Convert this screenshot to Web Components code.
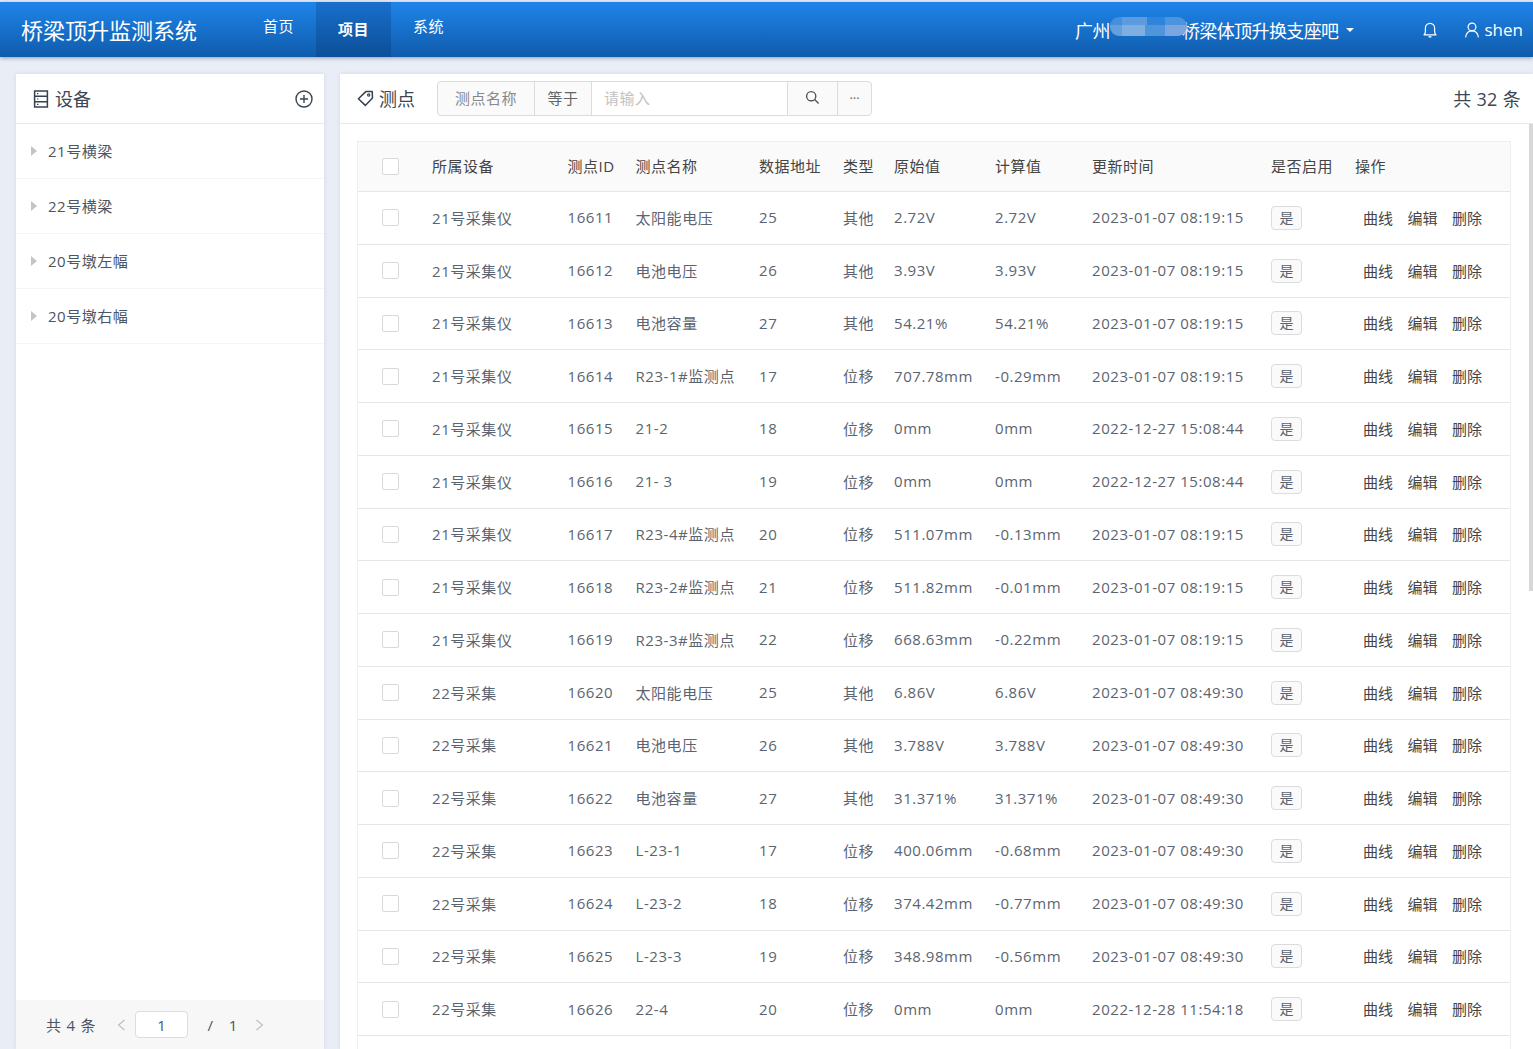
<!DOCTYPE html>
<html lang="zh">
<head>
<meta charset="utf-8">
<title>桥梁顶升监测系统</title>
<style>
html, body { margin: 0; height: 100%; overflow: hidden; }
body { background: #e9edf5; font-family: "Open Sans", "Noto Sans CJK SC", sans-serif; }
</style>
</head>
<body>
<bridge-app></bridge-app>
<script>
const icons = {
    server: `<svg width="16" height="18" viewBox="0 0 16 18" fill="none" stroke="#364152" stroke-width="1.5"><rect x="1.6" y="1" width="12.8" height="16"/><path d="M1.6 6.3h12.8M1.6 11.7h12.8"/><path d="M4 3.7h1.4M4 9h1.4M4 14.4h1.4" stroke-width="1.2"/></svg>`,
    plus: `<svg width="18" height="18" viewBox="0 0 18 18" fill="none" stroke="#3d4655" stroke-width="1.4"><circle cx="9" cy="9" r="8"/><path d="M9 5v8M5 9h8"/></svg>`,
    tag: `<svg width="17" height="17" viewBox="0 0 17 17" fill="none" stroke="#364152" stroke-width="1.5"><path d="M1.4 8.800 8.800 1.600 15.200 1.400 15.500 8 8.300 15.400Z" stroke-linejoin="round"/><circle cx="11.700" cy="5" r="1.100" stroke-width="1.200"/></svg>`,
    search: `<svg width="15" height="15" viewBox="0 0 15 15" fill="none" stroke="#555" stroke-width="1.4"><circle cx="6.2" cy="6.2" r="4.6"/><path d="m9.6 9.6 4 4"/></svg>`,
    bell: `<svg width="14" height="18" viewBox="0 0 14 18" fill="none" stroke="#fff" stroke-width="1.2"><path d="M1 13.8c1-1 1.400-2 1.400-3.400V7A4.600 4.600 0 0 1 7 2.300 4.600 4.600 0 0 1 11.600 7v3.400c0 1.400.4 2.400 1.400 3.400Z" stroke-linejoin="round"/><path d="M5.600 15.800h2.800" stroke-width="1.400"/></svg>`,
    user: `<svg width="16" height="16" viewBox="0 0 16 16" fill="none" stroke="#fff" stroke-width="1.2"><circle cx="8" cy="5" r="3.9"/><path d="M1.6 15.4c.5-4 3-6.5 6.4-6.5s5.900 2.500 6.400 6.500"/></svg>`,
    prev: `<svg width="9" height="12" viewBox="0 0 9 12" fill="none" stroke="#bdbdbd" stroke-width="1.1"><path d="M7.500 1 1.500 6l6 5"/></svg>`,
    next: `<svg width="9" height="12" viewBox="0 0 9 12" fill="none" stroke="#bdbdbd" stroke-width="1.1"><path d="m1.500 1 6 5-6 5"/></svg>`
};

class AppHeader extends HTMLElement {
    constructor() {
        super();
        this.attachShadow({mode: 'open'}).innerHTML = `
            <style>
                :host { display: flex; height: 55px; margin-top: 2px; color: #fff; flex: none; position: relative; z-index: 2;
                    background: linear-gradient(#1f84ea, #0f5cab); box-shadow: 0 1px 4px rgba(30,50,90,.45); }
                .logo { font-size: 22px; width: 263px; padding-left: 21px; box-sizing: border-box; line-height: 57px; white-space: nowrap; }
                .nav { font-size: 15px; letter-spacing: .5px; line-height: 49px; white-space: nowrap; }
                .nav.first { width: 53px; }
                .nav.on { width: 75px; text-align: center; font-weight: 700; line-height: 54px; background: rgba(0,30,80,.2); }
                .nav.last { margin-left: 22px; }
                .right { margin-left: auto; display: flex; align-items: center; font-size: 18px; }
                .project { position: relative; white-space: nowrap; letter-spacing: -.6px; margin-right: 1px; }
                .gap { display: inline-block; width: 72px; }
                .blur { position: absolute; left: 35px; top: 0; width: 77px; height: 19px; border-radius: 9px; filter: blur(.6px);
                    background:
                        linear-gradient(90deg, #4590dd 0 16%, #5b9be0 16% 48%, #2f85dc 48% 72%, #4c94de 72%) top / 100% 8px no-repeat,
                        linear-gradient(90deg, #62a0dd 0 16%, #80aee0 16% 46%, #4f95dc 46% 72%, #7aa5df 72%); }
                .caret { width: 0; height: 0; border: 4.500px solid transparent; border-top-color: #fff; border-bottom: 0; margin: 1px 0 0 6px; }
                .bell { display: flex; margin-left: 69px; }
                .user { display: flex; align-items: center; gap: 5px; margin: 0 10px 0 27px; font-size: 17px; }
            </style>
            <div class="logo">桥梁顶升监测系统</div>
            <div class="nav first">首页</div>
            <div class="nav on">项目</div>
            <div class="nav last">系统</div>
            <div class="right">
                <div class="project">广州<span class="gap"></span>桥梁体顶升换支座吧<div class="blur"></div></div>
                <div class="caret"></div>
                <div class="bell">${icons.bell}</div>
                <div class="user">${icons.user}<span>shen</span></div>
            </div>`;
    }
}
customElements.define('app-header', AppHeader);

class TreeItem extends HTMLElement {
    constructor() {
        super();
        this.attachShadow({mode: 'open'}).innerHTML = `
            <style>
                :host { display: flex; align-items: center; height: 54px; border-bottom: 1px solid #f5f5f5; padding-left: 15px; gap: 11px; font-size: 15px; letter-spacing: .5px; color: #4b5563; }
                span { padding-bottom: 2px; }
                i { width: 0; height: 0; border: 5px solid transparent; border-left: 6px solid #c4c4c4; border-right: 0; }
            </style>
            <i></i><span><slot></slot></span>`;
    }
}
customElements.define('tree-item', TreeItem);

class DevicePanel extends HTMLElement {
    constructor() {
        super();
        this.attachShadow({mode: 'open'}).innerHTML = `
            <style>
                :host { display: flex; flex-direction: column; width: 308px; background: #fff; box-shadow: 0 0 4px rgba(60,70,100,.12); }
                .head { display: flex; align-items: center; height: 49px; flex: none; border-bottom: 1px solid #e8e8e8; padding: 0 11px 0 17px; font-size: 18px; color: #3d4655; gap: 6px; }
                .head span { flex: 1; padding-bottom: 2px; }
                .head svg { display: block; }
                .list { flex: 1; }
                .foot { display: flex; align-items: center; height: 49px; flex: none; background: #f7f7f7; padding-left: 30px; font-size: 15px; letter-spacing: .8px; color: #4b5563; }
                .foot svg { display: block; flex: none; }
                .prev { margin: 0 9px 0 21px; }
                .next { margin-left: 17px; }
                .page { width: 53px; height: 27px; box-sizing: border-box; border: 1px solid #ddd; border-radius: 4px; background: #fff; text-align: center; line-height: 27px; }
                .sl { margin-left: 19px; }
                .tot { margin-left: 15px; }
            </style>
            <div class="head">${icons.server}<span>设备</span>${icons.plus}</div>
            <div class="list"><slot></slot></div>
            <div class="foot"><span>共 4 条</span><span class="prev">${icons.prev}</span><div class="page">1</div><span class="sl">/</span><span class="tot">1</span><span class="next">${icons.next}</span></div>`;
    }
}
customElements.define('device-panel', DevicePanel);

class SearchBar extends HTMLElement {
    constructor() {
        super();
        this.attachShadow({mode: 'open'}).innerHTML = `
            <style>
                :host { display: flex; height: 33px; border: 1px solid #dcdcdc; border-radius: 4px; background: #fafafa; font-size: 15px; letter-spacing: .5px; color: #888; margin-left: 17px; overflow: hidden; }
                div { display: flex; align-items: center; justify-content: center; box-sizing: border-box; border-left: 1px solid #dcdcdc; padding-bottom: 2px; }
                .a { width: 96px; border: 0; }
                .b { width: 57px; color: #666; }
                .c { width: 196px; background: #fff; color: #c2c2c2; justify-content: flex-start; padding-left: 12px; }
                .d { width: 50px; }
                .e { width: 34px; letter-spacing: 0; font-size: 13px; color: #666; }
            </style>
            <div class="a">测点名称</div><div class="b">等于</div><div class="c">请输入</div><div class="d">${icons.search}</div><div class="e">···</div>`;
    }
}
customElements.define('search-bar', SearchBar);

const gridColumns = '74px 135.500px 68px 123.500px 84px 51px 101px 97px 179px 84px 1fr';

class PointRow extends HTMLElement {
    constructor() {
        super();
        this.attachShadow({mode: 'open'});
    }

    connectedCallback() {
        const d = this.getAttribute('data').split('|');
        this.shadowRoot.innerHTML = `
            <style>
                :host { display: grid; grid-template-columns: ${gridColumns}; height: 52.75px; box-sizing: border-box; align-items: center; border-bottom: 1px solid #e6e6e6; font-size: 15px; letter-spacing: .55px; color: #5b6470; white-space: nowrap; }
                .t { padding-bottom: 1px; }
                .box { width: 17px; height: 17px; box-sizing: border-box; border: 1px solid #d9d9d9; border-radius: 2px; background: #fff; margin-left: 24px; }
                .on { width: 31px; height: 24px; box-sizing: border-box; border: 1px solid #dcdcdc; border-radius: 4px; background: #fafafa; text-align: center; line-height: 22px; font-size: 14px; letter-spacing: 0; }
                .act { display: flex; gap: 14.500px; padding-left: 8px; color: #444; letter-spacing: 0; }
            </style>
            <div class="box"></div>
            ${d.map(v => `<div class="t">${v}</div>`).join('')}
            <div><div class="on">是</div></div>
            <div class="act t"><span>曲线</span><span>编辑</span><span>删除</span></div>`;
    }
}
customElements.define('point-row', PointRow);

class PointsTable extends HTMLElement {
    constructor() {
        super();
        this.attachShadow({mode: 'open'}).innerHTML = `
            <style>
                :host { display: block; flex: 1; margin: 17px 22px 0 17px; border: 1px solid #efefef; border-bottom: 0; }
                .head { display: grid; grid-template-columns: ${gridColumns}; height: 50px; box-sizing: border-box; align-items: center; background: #fafafa; border-bottom: 1px solid #e6e6e6; font-size: 15px; letter-spacing: .5px; color: #444; white-space: nowrap; }
                .head div:not(.box) { padding-bottom: 3px; }
                .box { width: 17px; height: 17px; box-sizing: border-box; border: 1px solid #d9d9d9; border-radius: 2px; background: #fff; margin-left: 24px; }
            </style>
            <div class="head"><div class="box"></div><div>所属设备</div><div>测点ID</div><div>测点名称</div><div>数据地址</div><div>类型</div><div>原始值</div><div>计算值</div><div>更新时间</div><div>是否启用</div><div>操作</div></div>
            <slot></slot>`;
    }
}
customElements.define('points-table', PointsTable);

class PointsPanel extends HTMLElement {
    constructor() {
        super();
        this.attachShadow({mode: 'open'}).innerHTML = `
            <style>
                :host { display: flex; flex-direction: column; flex: 1; min-width: 0; background: #fff; position: relative; box-shadow: 0 0 4px rgba(60,70,100,.12); }
                .head { display: flex; align-items: center; height: 49px; flex: none; border-bottom: 1px solid #e8e8e8; padding-left: 17px; font-size: 18px; color: #3d4655; gap: 5px; }
                .head svg { display: block; }
                .head > span { padding-bottom: 2px; }
                .count { margin-left: auto; margin-right: 12px; letter-spacing: .3px; }
                .thumb { position: absolute; right: 0; top: 50px; width: 4px; height: 467px; background: #d8d8d8; }
            </style>
            <div class="head">${icons.tag}<span>测点</span><search-bar></search-bar><span class="count">共 32 条</span></div>
            <slot></slot>
            <div class="thumb"></div>`;
    }
}
customElements.define('points-panel', PointsPanel);

const rows = [
    '21号采集仪|16611|太阳能电压|25|其他|2.72V|2.72V|2023-01-07 08:19:15',
    '21号采集仪|16612|电池电压|26|其他|3.93V|3.93V|2023-01-07 08:19:15',
    '21号采集仪|16613|电池容量|27|其他|54.21%|54.21%|2023-01-07 08:19:15',
    '21号采集仪|16614|R23-1#监测点|17|位移|707.78mm|-0.29mm|2023-01-07 08:19:15',
    '21号采集仪|16615|21-2|18|位移|0mm|0mm|2022-12-27 15:08:44',
    '21号采集仪|16616|21- 3|19|位移|0mm|0mm|2022-12-27 15:08:44',
    '21号采集仪|16617|R23-4#监测点|20|位移|511.07mm|-0.13mm|2023-01-07 08:19:15',
    '21号采集仪|16618|R23-2#监测点|21|位移|511.82mm|-0.01mm|2023-01-07 08:19:15',
    '21号采集仪|16619|R23-3#监测点|22|位移|668.63mm|-0.22mm|2023-01-07 08:19:15',
    '22号采集|16620|太阳能电压|25|其他|6.86V|6.86V|2023-01-07 08:49:30',
    '22号采集|16621|电池电压|26|其他|3.788V|3.788V|2023-01-07 08:49:30',
    '22号采集|16622|电池容量|27|其他|31.371%|31.371%|2023-01-07 08:49:30',
    '22号采集|16623|L-23-1|17|位移|400.06mm|-0.68mm|2023-01-07 08:49:30',
    '22号采集|16624|L-23-2|18|位移|374.42mm|-0.77mm|2023-01-07 08:49:30',
    '22号采集|16625|L-23-3|19|位移|348.98mm|-0.56mm|2023-01-07 08:49:30',
    '22号采集|16626|22-4|20|位移|0mm|0mm|2022-12-28 11:54:18'
];

class BridgeApp extends HTMLElement {
    constructor() {
        super();
        this.attachShadow({mode: 'open'}).innerHTML = `
            <style>
                :host { display: flex; flex-direction: column; height: 100vh; overflow: hidden; background: #e9edf5; }
                main { display: flex; gap: 16px; flex: 1; min-height: 0; padding: 17px 0 0 16px; }
            </style>
            <app-header></app-header>
            <main>
                <device-panel>
                    <tree-item>21号横梁</tree-item>
                    <tree-item>22号横梁</tree-item>
                    <tree-item>20号墩左幅</tree-item>
                    <tree-item>20号墩右幅</tree-item>
                </device-panel>
                <points-panel>
                    <points-table>${rows.map(r => `<point-row data="${r}"></point-row>`).join('')}</points-table>
                </points-panel>
            </main>`;
    }
}
customElements.define('bridge-app', BridgeApp);
</script>
</body>
</html>
